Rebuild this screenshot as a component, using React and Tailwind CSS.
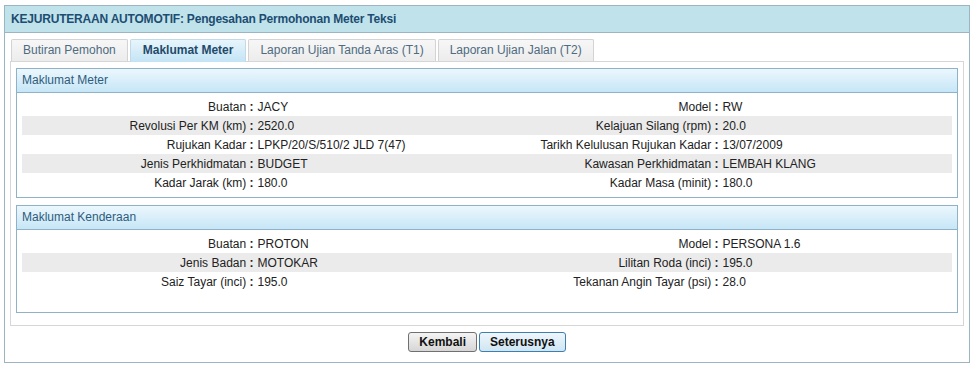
import React, { useState } from 'react';

const meterRows = [
  ['Buatan', 'JACY', 'Model', 'RW'],
  ['Revolusi Per KM (km)', '2520.0', 'Kelajuan Silang (rpm)', '20.0'],
  ['Rujukan Kadar', 'LPKP/20/S/510/2 JLD 7(47)', 'Tarikh Kelulusan Rujukan Kadar', '13/07/2009'],
  ['Jenis Perkhidmatan', 'BUDGET', 'Kawasan Perkhidmatan', 'LEMBAH KLANG'],
  ['Kadar Jarak (km)', '180.0', 'Kadar Masa (minit)', '180.0'],
];

const kenderaanRows = [
  ['Buatan', 'PROTON', 'Model', 'PERSONA 1.6'],
  ['Jenis Badan', 'MOTOKAR', 'Lilitan Roda (inci)', '195.0'],
  ['Saiz Tayar (inci)', '195.0', 'Tekanan Angin Tayar (psi)', '28.0'],
];

const tabs = [
  'Butiran Pemohon',
  'Maklumat Meter',
  'Laporan Ujian Tanda Aras (T1)',
  'Laporan Ujian Jalan (T2)',
];

// one label/value pair, label is right aligned up to the colon
const Field = ({ label, value }) => (
  <>
    <div className="text-right pr-[1px] whitespace-nowrap">
      {label} <span className="font-bold">:</span>
    </div>
    <div className="pl-[3px] whitespace-nowrap">{value}</div>
  </>
);

const InfoBox = ({ title, rows, extraRow, className = '' }) => (
  <div className={`border border-[#8fb2c6] ${className}`}>
    <div className="h-[24px] leading-[23px] border-b border-[#8fb2c6] bg-linear-to-b from-[#ecf7fd] to-[#c6e6f7] pl-[5px] text-[#2e5c7d]">
      {title}
    </div>
    <div className="px-[5px] pt-[4px] pb-[5px]">
      {rows.map((r, i) => (
        <div
          key={i}
          className={`grid grid-cols-4 h-[19px] leading-[20px] ${i % 2 === 1 ? 'bg-[#ebebeb]' : ''}`}
        >
          <Field label={r[0]} value={r[1]} />
          <Field label={r[2]} value={r[3]} />
        </div>
      ))}
      {extraRow && <div className="h-[16px]" />}
    </div>
  </div>
);

const App = () => {
  const [active, setActive] = useState(1);

  return (
    <div className="font-['Liberation_Sans',Arial,sans-serif] text-[12px] text-[#222] bg-white w-[974px] h-[366px] pt-[5px]">
      <div className="ml-[4px] w-[966px] border border-[#9db4c2]">
        <div className="h-[27px] leading-[26px] border-b border-[#9db4c2] bg-[#c0e3eb] pl-[6px] font-bold tracking-[-0.2px] text-[#1d4d72]">
          KEJURUTERAAN AUTOMOTIF: Pengesahan Permohonan Meter Teksi
        </div>

        <div className="px-[5px] pt-[6px]">
          {/* tabs */}
          <div className="flex items-end gap-[2px] pl-[1px]">
            {tabs.map((t, i) =>
              i === active ? (
                <button
                  key={t}
                  onClick={() => setActive(i)}
                  className="relative z-10 -mb-px h-[23px] pb-[1px] px-[12px] border border-b-0 border-[#c4d9e6] rounded-t-[2px] bg-linear-to-b from-[#e8f5fc] to-[#c3e4f5] font-bold text-[#1f4a6b] leading-[21px]"
                >
                  {t}
                </button>
              ) : (
                <button
                  key={t}
                  onClick={() => setActive(i)}
                  className="h-[22px] px-[11px] border border-b-0 border-[#d3d3d3] rounded-t-[2px] bg-linear-to-b from-[#f7f7f7] to-[#ececec] text-[#4e6b80] leading-[21px]"
                >
                  {t}
                </button>
              )
            )}
          </div>

          {/* tab content */}
          <div className="border border-[#d6d6d6] px-[5px] pt-[6px] pb-[12px]">
            <InfoBox title="Maklumat Meter" rows={meterRows} />
            <InfoBox title="Maklumat Kenderaan" rows={kenderaanRows} extraRow className="mt-[7px]" />
          </div>
        </div>

        <div className="flex justify-center gap-[2px] pt-[6px] pb-[10px]">
          <button className="h-[20px] px-[10px] border border-[#707070] rounded-[3px] bg-linear-to-b from-[#f4f4f4] to-[#d6d6d6] font-bold text-[#111] leading-[18px]">
            Kembali
          </button>
          <button className="h-[20px] px-[10px] border border-[#3c7fb1] rounded-[3px] bg-linear-to-b from-[#eef6fb] to-[#cfe6f3] font-bold text-[#111] leading-[18px]">
            Seterusnya
          </button>
        </div>
      </div>
    </div>
  );
};

export default App;
